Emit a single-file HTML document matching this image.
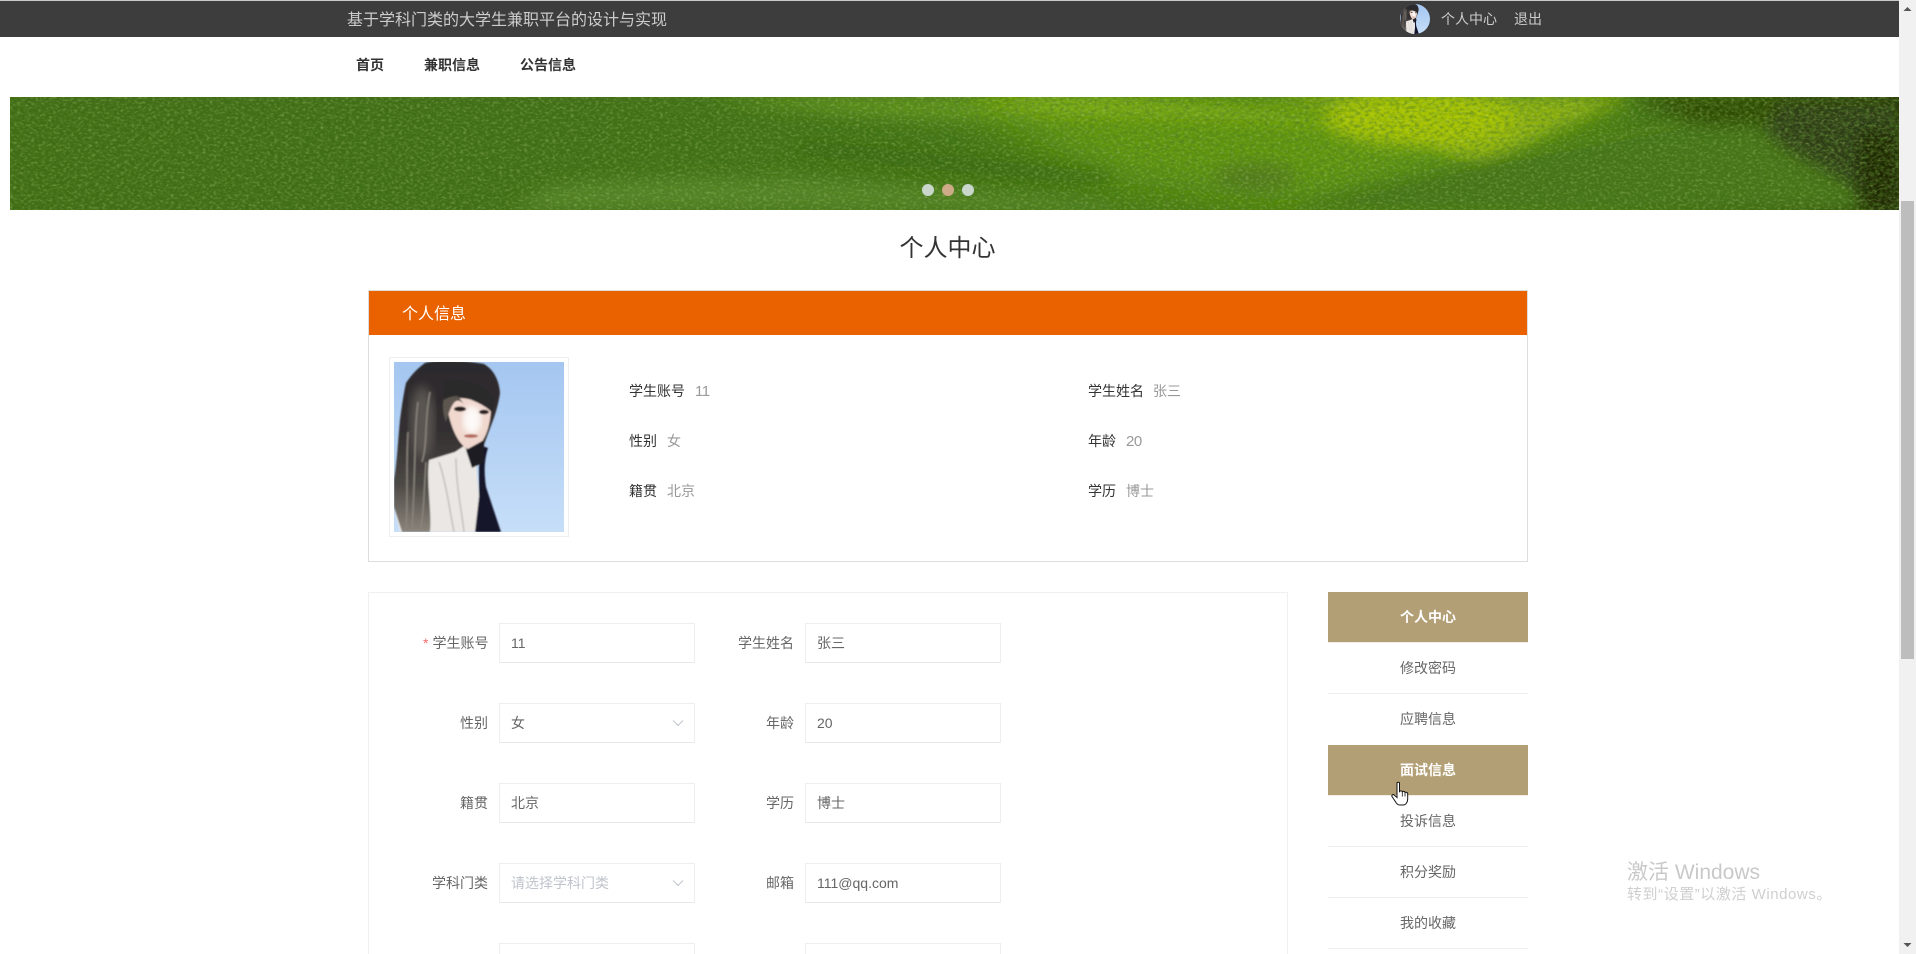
<!DOCTYPE html>
<html lang="zh-CN">
<head>
<meta charset="utf-8">
<title>个人中心</title>
<style>
*{box-sizing:border-box;margin:0;padding:0}
html,body{width:1916px;height:954px;overflow:hidden;background:#fff}
body{position:relative;font-family:"Liberation Sans","Noto Sans CJK SC",sans-serif;font-size:14px;color:#333}
.a{position:absolute}
.t{position:absolute;white-space:nowrap;line-height:20px}
.box{position:absolute;background:#fff;border:1px solid #eee;border-bottom-color:#e8e8e8;height:40px;width:196px;line-height:38px;padding-left:11px;color:#666;font-size:14px}
.lab{position:absolute;white-space:nowrap;text-align:right;color:#666;line-height:20px}
.k{color:#333}.v{color:#999;margin-left:10px}
.d{font-size:15px;letter-spacing:-.5px}
.m{position:absolute;left:1328px;width:200px;height:51px;line-height:50px;text-align:center;color:#666;border-bottom:1px solid #eee;background:#fff}
.m.on{background:#b39f75;color:#fff;font-weight:700;border-bottom:1px solid #f3eee4}
</style>
</head>
<body>
<div class="a" style="left:0;top:0;width:1899px;height:37px;background:#3d3d3d;border-top:1px solid #c9c9c9"></div>
<div class="t" style="left:347px;top:11px;font-size:16px;color:#ccc">基于学科门类的大学生兼职平台的设计与实现</div>
<svg class="a" style="left:1400px;top:4px" width="30" height="30" viewBox="0 0 170 170"><defs><clipPath id="c"><circle cx="85" cy="85" r="85"/></clipPath></defs><g clip-path="url(#c)"><use href="#photo"/></g></svg>
<div class="t" style="left:1441px;top:9px;color:#ccc">个人中心</div>
<div class="t" style="left:1514px;top:9px;color:#ccc">退出</div>

<div class="t" style="left:356px;top:55px;font-weight:700;color:#333">首页</div>
<div class="t" style="left:424px;top:55px;font-weight:700;color:#333">兼职信息</div>
<div class="t" style="left:520px;top:55px;font-weight:700;color:#333">公告信息</div>

<svg class="a" style="left:10px;top:97px" width="1889" height="113" viewBox="0 0 1889 113">
<defs>
<linearGradient id="bg" x1="0" x2="1" y1="0" y2="0">
<stop offset="0" stop-color="#3f6c14"/><stop offset=".3" stop-color="#3f6e16"/><stop offset=".5" stop-color="#427414"/><stop offset=".7" stop-color="#4a7e14"/><stop offset=".85" stop-color="#447616"/><stop offset=".95" stop-color="#365a10"/><stop offset="1" stop-color="#1f2c06"/>
</linearGradient>
<filter id="b8" x="-30%" y="-60%" width="160%" height="220%"><feGaussianBlur stdDeviation="8"/></filter>
<filter id="b3" x="-30%" y="-60%" width="160%" height="220%"><feGaussianBlur stdDeviation="3"/></filter>
<filter id="b20" x="-30%" y="-80%" width="160%" height="260%"><feGaussianBlur stdDeviation="20"/></filter>
<filter id="n" x="0" y="0" width="100%" height="100%"><feTurbulence type="fractalNoise" baseFrequency=".2 .32" numOctaves="3" seed="9"/><feColorMatrix values="0 0 0 0 .08  0 0 0 0 .2  0 0 0 0 .02  2.4 0 0 0 -.95"/></filter>
<filter id="n2" x="0" y="0" width="100%" height="100%"><feTurbulence type="fractalNoise" baseFrequency=".28 .4" numOctaves="2" seed="21"/><feColorMatrix values="0 0 0 0 .5  0 0 0 0 .68  0 0 0 0 .22  2.6 0 0 0 -1.25"/></filter>
</defs>
<rect width="1889" height="113" fill="url(#bg)"/>
<path d="M700 0H1100L1120 26C980 26 820 20 700 0Z" fill="#62951a" filter="url(#b8)"/>
<path d="M950 0H1640L1500 60 1290 105 1110 85 1000 30Z" fill="#609610" filter="url(#b20)"/>
<path d="M950 0H1110C1200 8 1300 12 1380 34L1240 24 1040 18Z" fill="#7fad0c" filter="url(#b8)"/>
<path d="M1250 0H1620L1540 34 1480 70 1440 58C1400 30 1340 14 1250 0Z" fill="#90b208" filter="url(#b8)"/>
<ellipse cx="1410" cy="22" rx="95" ry="26" fill="#a8c400" filter="url(#b8)"/>
<path d="M1265 113L1498 60 1670 27 1889 20V113Z" fill="#447318" filter="url(#b8)"/>
<path d="M1498 60L1670 27" stroke="#5f9018" stroke-width="2" fill="none" filter="url(#b3)"/>
<path d="M800 44C900 52 1000 66 1100 74L1100 88C1000 82 880 68 780 58Z" fill="#346408" opacity=".7" filter="url(#b8)"/>
<ellipse cx="1245" cy="80" rx="42" ry="14" fill="#4b6e22" opacity=".6" filter="url(#b8)"/>
<path d="M540 90C640 78 760 80 860 90L1100 108V113H500Z" fill="#558426" filter="url(#b8)"/>
<path d="M760 82C840 86 930 96 1100 110" stroke="#7ea84a" stroke-width="3" fill="none" opacity=".35" filter="url(#b8)"/>
<path d="M1620 0H1889V26H1690Z" fill="#2f4a06" filter="url(#b8)"/>
<path d="M1770 4H1889V113H1870C1830 70 1770 60 1755 30Z" fill="#2e3d14" filter="url(#b8)"/>
<rect x="1850" y="36" width="39" height="77" fill="#1b2804" filter="url(#b8)"/>
<rect width="1889" height="113" filter="url(#n)" opacity=".6"/>
<rect width="1889" height="113" filter="url(#n2)" opacity=".35"/>
<circle cx="918" cy="93" r="6" fill="#c8d6cc"/><circle cx="938" cy="93" r="6" fill="#cdab88"/><circle cx="958" cy="93" r="6" fill="#c8d6cc"/>
</svg>

<div class="t" style="left:899.500px;top:231px;font-size:24px;line-height:36px;color:#333">个人中心</div>

<div class="a" style="left:368px;top:290px;width:1160px;height:272px;border:1px solid #ddd;background:#fff"></div>
<div class="a" style="left:369px;top:291px;width:1158px;height:44px;background:#ea6200"></div>
<div class="t" style="left:402px;top:305px;font-size:16px;color:#fff">个人信息</div>

<div class="a" style="left:389px;top:357px;width:180px;height:180px;border:1px solid #eee;background:#fff"></div>
<svg class="a" style="left:394px;top:362px" width="170" height="170" viewBox="0 0 170 170">
<defs>
<linearGradient id="sky" x1="0" y1="0" x2="0" y2="1"><stop offset="0" stop-color="#a4c6f0"/><stop offset="1" stop-color="#c6def8"/></linearGradient>
<linearGradient id="hr" x1="0" y1="0" x2="0" y2="1"><stop offset="0" stop-color="#2b292c"/><stop offset=".4" stop-color="#322e30"/><stop offset=".72" stop-color="#4d4945"/><stop offset="1" stop-color="#8a847b"/></linearGradient>
<filter id="p1"><feGaussianBlur stdDeviation=".8"/></filter>
<filter id="p2"><feGaussianBlur stdDeviation="3"/></filter>
<filter id="p4"><feGaussianBlur stdDeviation="5"/></filter>
</defs>
<g id="photo">
<rect width="170" height="170" fill="url(#sky)"/>
<g filter="url(#p1)">
<path d="M0 145L6 170H36L20 130Z" fill="#ece9e6"/>
<path d="M31 1C40-2 70-2 90 2 100 8 105 18 106 31 104 45 100 56 98 61L88 88 60 92 36 100 40 135 36 170H8L0 145V118C3 100 4 78 6 58 8 42 10 30 12 21 18 12 24 6 31 1Z" fill="url(#hr)"/>
<ellipse cx="28" cy="60" rx="12" ry="36" fill="#6b655e" opacity=".75" filter="url(#p4)"/>
<path d="M35 98L61 90 70 84 82 100 85 135 81 170H36C38 150 32 120 35 98Z" fill="#ebe7e4"/>
<path d="M45 100C52 120 56 150 60 170M62 96C62 125 68 150 70 170" stroke="#c4bfba" stroke-width="1.500" fill="none"/>
<path d="M88 84L85 105 85 135 81 170H107L92 125C90 112 90 98 94 86Z" fill="#151829"/>
<path d="M52 38C64 34 84 36 97 48 96 66 90 84 77 88 66 86 56 68 52 38Z" fill="#f0d8ce"/>
<path d="M52 30C60 26 68 40 70 42 62 34 58 40 52 60 48 50 48 38 52 30Z" fill="#5d5650"/>
<path d="M50 20C66 14 90 22 100 36L99 52C94 44 78 38 68 34 62 34 56 34 50 38Z" fill="#2b292c"/>
<path d="M72 88L90 78 90 100 78 106Z" fill="#1d1b22"/>
<ellipse cx="78" cy="58" rx="9" ry="14" fill="#fff" opacity=".85" filter="url(#p2)"/>
<ellipse cx="66" cy="47" rx="6" ry="2.500" fill="#2b2022"/><ellipse cx="90" cy="50" rx="5" ry="2.300" fill="#2b2022"/>
<ellipse cx="77" cy="74" rx="7" ry="1.800" fill="#b4675c"/>
<path d="M24 40C20 70 22 100 18 168M36 30C30 60 34 80 28 100M14 70C12 100 14 140 12 168M32 100C30 130 30 150 26 170" stroke="#8a847c" stroke-width="1.500" fill="none"/>
</g>
</g>
</svg>

<div class="t" style="left:629px;top:381px"><span class="k">学生账号</span><span class="v d">11</span></div>
<div class="t" style="left:629px;top:431px"><span class="k">性别</span><span class="v">女</span></div>
<div class="t" style="left:629px;top:481px"><span class="k">籍贯</span><span class="v">北京</span></div>
<div class="t" style="left:1088px;top:381px"><span class="k">学生姓名</span><span class="v" style="margin-left:9px">张三</span></div>
<div class="t" style="left:1088px;top:431px"><span class="k">年龄</span><span class="v d">20</span></div>
<div class="t" style="left:1088px;top:481px"><span class="k">学历</span><span class="v">博士</span></div>

<div class="a" style="left:368px;top:592px;width:920px;height:370px;border:1px solid #f0f0f0;background:#fff"></div>

<div class="lab" style="left:423px;top:633px"><span style="color:#f56c6c;margin-right:4px">*</span>学生账号</div>
<div class="box" style="left:499px;top:623px">11</div>
<div class="lab" style="left:738px;top:633px">学生姓名</div>
<div class="box" style="left:805px;top:623px">张三</div>

<div class="lab" style="left:460px;top:713px">性别</div>
<div class="box" style="left:499px;top:703px">女</div>
<svg class="a" style="left:672px;top:719px" width="12" height="8" viewBox="0 0 12 8"><path d="M1 1.500L6 6.500 11 1.500" fill="none" stroke="#c0c4cc" stroke-width="1"/></svg>
<div class="lab" style="left:766px;top:713px">年龄</div>
<div class="box" style="left:805px;top:703px">20</div>

<div class="lab" style="left:460px;top:793px">籍贯</div>
<div class="box" style="left:499px;top:783px">北京</div>
<div class="lab" style="left:766px;top:793px">学历</div>
<div class="box" style="left:805px;top:783px">博士</div>

<div class="lab" style="left:432px;top:873px">学科门类</div>
<div class="box" style="left:499px;top:863px;color:#c0c4cc">请选择学科门类</div>
<svg class="a" style="left:672px;top:879px" width="12" height="8" viewBox="0 0 12 8"><path d="M1 1.500L6 6.500 11 1.500" fill="none" stroke="#c0c4cc" stroke-width="1"/></svg>
<div class="lab" style="left:766px;top:873px">邮箱</div>
<div class="box" style="left:805px;top:863px">111@qq.com</div>

<div class="box" style="left:499px;top:943px"></div>
<div class="box" style="left:805px;top:943px"></div>

<div class="m on" style="top:592px">个人中心</div>
<div class="m" style="top:643px">修改密码</div>
<div class="m" style="top:694px;border-bottom:0">应聘信息</div>
<div class="m on" style="top:745px">面试信息</div>
<div class="m" style="top:796px">投诉信息</div>
<div class="m" style="top:847px">积分奖励</div>
<div class="m" style="top:898px">我的收藏</div>

<svg class="a" style="left:1391px;top:781px" width="20" height="25" viewBox="0 0 20 25"><path d="M6 2C6 1 8.500 1 8.500 2V10.500C9.500 9.500 11 9.700 11.300 10.800 12.300 10 13.800 10.300 14 11.500 15 10.900 16.500 11.300 16.700 12.700V18C16.700 21 15 24 12 24H9C6.500 24 5.500 22.500 4 20L1 15.500C.3 14 2 13 3.200 14L6 16.500Z" fill="#fff" stroke="#111" stroke-width="1"/><path d="M11.300 11V15.500M14 11.500V15.500" stroke="#111" stroke-width=".8"/></svg>

<div class="t" style="left:1627px;top:861px;font-size:21px;line-height:24px;color:#c9c9c9">激活 Windows</div>
<div class="t" style="left:1627px;top:885px;font-size:15px;letter-spacing:.55px;color:#cfcfcf">转到“设置”以激活 Windows。</div>

<div class="a" style="left:1899px;top:0;width:17px;height:954px;background:#f1f1f1"></div>
<div class="a" style="left:1901px;top:201px;width:13px;height:458px;background:#bdbdbd"></div>
<svg class="a" style="left:1903px;top:6px" width="9" height="6"><path d="M4.500 1L8.500 5H.5Z" fill="#555"/></svg>
<svg class="a" style="left:1903px;top:942px" width="9" height="6"><path d="M4.500 5L8.500 1H.5Z" fill="#555"/></svg>
</body>
</html>
